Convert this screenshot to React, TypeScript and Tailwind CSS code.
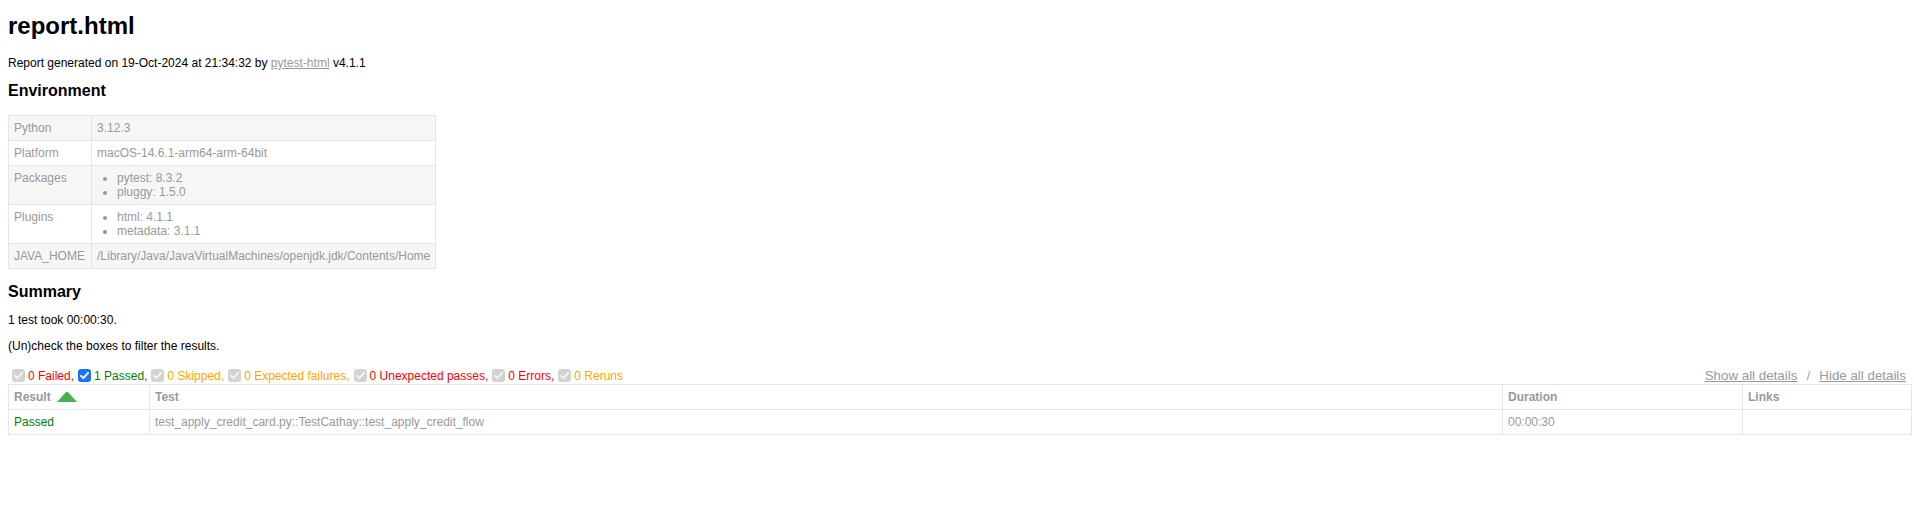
import React from "react";

const envRows: { key: string; value: string | string[] }[] = [
  { key: "Python", value: "3.12.3" },
  { key: "Platform", value: "macOS-14.6.1-arm64-arm-64bit" },
  { key: "Packages", value: ["pytest: 8.3.2", "pluggy: 1.5.0"] },
  { key: "Plugins", value: ["html: 4.1.1", "metadata: 3.1.1"] },
  { key: "JAVA_HOME", value: "/Library/Java/JavaVirtualMachines/openjdk.jdk/Contents/Home" },
];

const filters = [
  { label: "0 Failed,", color: "text-[#ff0000]", active: false },
  { label: "1 Passed,", color: "text-[#008000]", active: true },
  { label: "0 Skipped,", color: "text-[#ffa500]", active: false },
  { label: "0 Expected failures,", color: "text-[#ffa500]", active: false },
  { label: "0 Unexpected passes,", color: "text-[#ff0000]", active: false },
  { label: "0 Errors,", color: "text-[#ff0000]", active: false },
  { label: "0 Reruns", color: "text-[#ffa500]", active: false },
];

function Checkbox({ active }: { active: boolean }) {
  return (
    <span
      className={
        "inline-block w-[13px] h-[13px] ml-[4px] mr-[3px] rounded-[3px] align-[-2px] " +
        (active ? "bg-[#1a73f0]" : "bg-[#d3d3d3]")
      }
    >
      <svg width="13" height="13" viewBox="0 0 13 13" className="block">
        <path
          d="M3 6.8 L5.4 9.2 L10 3.8"
          fill="none"
          stroke={active ? "#ffffff" : "#f4f4f4"}
          strokeWidth="1.9"
          strokeLinecap="round"
          strokeLinejoin="round"
        />
      </svg>
    </span>
  );
}

export default function App() {
  return (
    <div className="min-h-screen bg-white pl-[8px] pr-[2px] pt-[12px] font-['Liberation_Sans',Arial,sans-serif] text-[12px] text-[#999]">
      <h1 className="text-[24px] font-bold leading-[28px] text-black">report.html</h1>
      <p className="mt-[16px] leading-[14px] text-black">
        Report generated on 19-Oct-2024 at 21:34:32 by{" "}
        <a href="#" className="text-[#999] underline">pytest-html</a> v4.1.1
      </p>

      {/* environment */}
      <h2 className="mt-[12px] text-[16px] font-bold leading-[18px] text-black">Environment</h2>
      <table className="mt-[15px] border-collapse">
        <tbody>
          {envRows.map((row, i) => (
            <tr key={row.key} className={i % 2 === 0 ? "bg-[#f6f6f6]" : ""}>
              <td className="w-[83px] border border-[#e6e6e6] p-[5px] align-top leading-[14px]">{row.key}</td>
              <td className="border border-[#e6e6e6] p-[5px] align-top leading-[14px]">
                {Array.isArray(row.value) ? (
                  <ul className="m-0 list-disc px-[20px]">
                    {row.value.map((v) => (
                      <li key={v}>{v}</li>
                    ))}
                  </ul>
                ) : (
                  row.value
                )}
              </td>
            </tr>
          ))}
        </tbody>
      </table>

      {/* summary */}
      <h2 className="mt-[14px] text-[16px] font-bold leading-[18px] text-black">Summary</h2>
      <p className="mt-[12px] leading-[14px] text-black">1 test took 00:00:30.</p>
      <p className="mt-[12px] leading-[14px] text-black">(Un)check the boxes to filter the results.</p>

      <div className="mt-[12px] flex h-[19px] items-center justify-between">
        <div className="pt-[2px] leading-[14px]">
          {filters.map((f) => (
            <React.Fragment key={f.label}>
              <Checkbox active={f.active} />
              <span className={f.color}>{f.label}</span>
            </React.Fragment>
          ))}
        </div>
        <div className="pt-[2px] leading-[14px]">
          <button className="px-[6px] py-[1px] text-[13.33px] text-[#999] underline">Show all details</button>
          &nbsp;/&nbsp;
          <button className="px-[6px] py-[1px] text-[13.33px] text-[#999] underline">Hide all details</button>
        </div>
      </div>

      {/* results */}
      <table className="w-full border-collapse border border-[#e6e6e6] text-[12px] text-[#999]">
        <thead>
          <tr>
            <th className="w-[141px] border border-[#e6e6e6] p-[5px] text-left font-bold leading-[14px]">
              Result
              <svg width="20" height="10" viewBox="0 0 20 10" className="ml-[6px] inline-block align-[-1px]">
                <polygon points="0,10 9,0 11,0 20,10" fill="#4caf50" />
              </svg>
            </th>
            <th className="border border-[#e6e6e6] p-[5px] text-left font-bold leading-[14px]">Test</th>
            <th className="w-[240px] border border-[#e6e6e6] p-[5px] text-left font-bold leading-[14px]">Duration</th>
            <th className="w-[169px] border border-[#e6e6e6] p-[5px] text-left font-bold leading-[14px]">Links</th>
          </tr>
        </thead>
        <tbody>
          <tr>
            <td className="border border-[#e6e6e6] p-[5px] leading-[14px] text-[#008000]">Passed</td>
            <td className="border border-[#e6e6e6] p-[5px] leading-[14px]">
              test_apply_credit_card.py::TestCathay::test_apply_credit_flow
            </td>
            <td className="border border-[#e6e6e6] p-[5px] leading-[14px]">00:00:30</td>
            <td className="border border-[#e6e6e6] p-[5px] leading-[14px]"></td>
          </tr>
        </tbody>
      </table>
    </div>
  );
}
